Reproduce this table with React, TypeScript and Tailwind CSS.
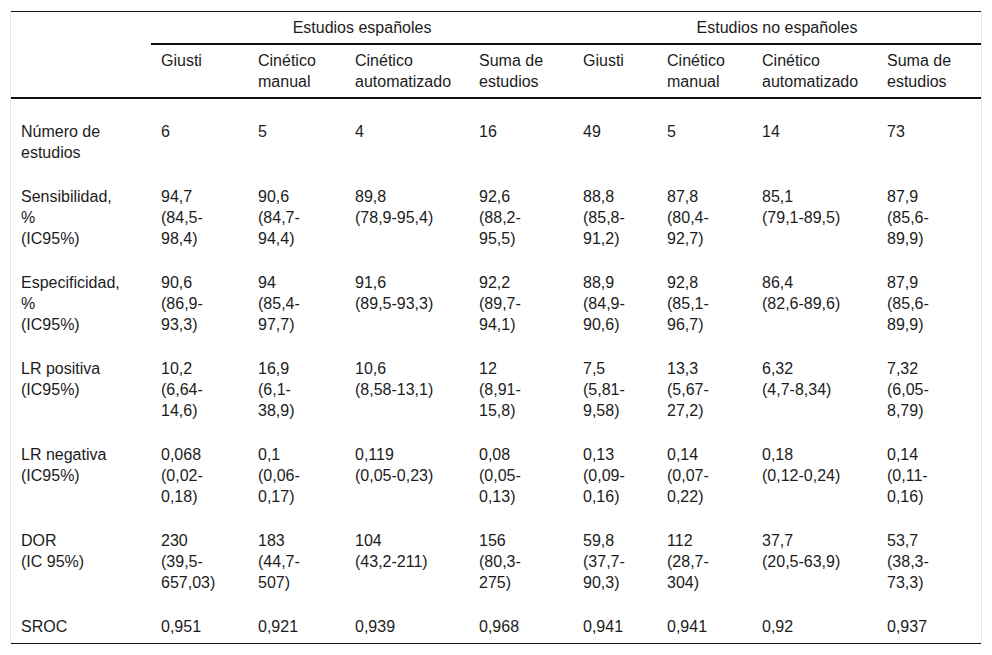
const widths = [140, 97, 97, 124, 104, 84, 95, 125, 104];

const subHeaders = [
  "Giusti",
  "Cinético\nmanual",
  "Cinético\nautomatizado",
  "Suma de\nestudios",
  "Giusti",
  "Cinético\nmanual",
  "Cinético\nautomatizado",
  "Suma de\nestudios",
];

const rows = [
  ["Número de\nestudios", "6", "5", "4", "16", "49", "5", "14", "73"],
  [
    "Sensibilidad,\n%\n(IC95%)",
    "94,7\n(84,5-\n98,4)",
    "90,6\n(84,7-\n94,4)",
    "89,8\n(78,9-95,4)",
    "92,6\n(88,2-\n95,5)",
    "88,8\n(85,8-\n91,2)",
    "87,8\n(80,4-\n92,7)",
    "85,1\n(79,1-89,5)",
    "87,9\n(85,6-\n89,9)",
  ],
  [
    "Especificidad,\n%\n(IC95%)",
    "90,6\n(86,9-\n93,3)",
    "94\n(85,4-\n97,7)",
    "91,6\n(89,5-93,3)",
    "92,2\n(89,7-\n94,1)",
    "88,9\n(84,9-\n90,6)",
    "92,8\n(85,1-\n96,7)",
    "86,4\n(82,6-89,6)",
    "87,9\n(85,6-\n89,9)",
  ],
  [
    "LR positiva\n(IC95%)",
    "10,2\n(6,64-\n14,6)",
    "16,9\n(6,1-\n38,9)",
    "10,6\n(8,58-13,1)",
    "12\n(8,91-\n15,8)",
    "7,5\n(5,81-\n9,58)",
    "13,3\n(5,67-\n27,2)",
    "6,32\n(4,7-8,34)",
    "7,32\n(6,05-\n8,79)",
  ],
  [
    "LR negativa\n(IC95%)",
    "0,068\n(0,02-\n0,18)",
    "0,1\n(0,06-\n0,17)",
    "0,119\n(0,05-0,23)",
    "0,08\n(0,05-\n0,13)",
    "0,13\n(0,09-\n0,16)",
    "0,14\n(0,07-\n0,22)",
    "0,18\n(0,12-0,24)",
    "0,14\n(0,11-\n0,16)",
  ],
  [
    "DOR\n(IC 95%)",
    "230\n(39,5-\n657,03)",
    "183\n(44,7-\n507)",
    "104\n(43,2-211)",
    "156\n(80,3-\n275)",
    "59,8\n(37,7-\n90,3)",
    "112\n(28,7-\n304)",
    "37,7\n(20,5-63,9)",
    "53,7\n(38,3-\n73,3)",
  ],
  ["SROC", "0,951", "0,921", "0,939", "0,968", "0,941", "0,941", "0,92", "0,937"],
];

const Lines = ({ text }: { text: string }) => (
  <>
    {text.split("\n").map((line, i) => (
      <div key={i}>{line}</div>
    ))}
  </>
);

export default function App() {
  return (
    <div className="bg-white min-h-[655px] pt-[11px] pl-[10px] font-['Liberation_Sans',Arial,sans-serif] text-[16px] leading-[21px] text-[#1c1c1c]">
      <div className="w-[972px] border-x border-[#e6e6e6]">
        <table className="table-fixed border-separate border-spacing-0 w-[970px]">
          <colgroup>
            {widths.map((w, i) => (
              <col key={i} style={{ width: w }} />
            ))}
          </colgroup>
          <thead>
            <tr>
              <th
                rowSpan={2}
                className="border-t border-b-2 border-[#111] px-[10px] py-[5px]"
              ></th>
              <th
                colSpan={4}
                className="border-t border-b-2 border-[#111] px-[10px] py-[5px] text-center font-normal"
              >
                Estudios españoles
              </th>
              <th
                colSpan={4}
                className="border-t border-b-2 border-[#111] px-[10px] py-[5px] text-center font-normal"
              >
                Estudios no españoles
              </th>
            </tr>
            <tr>
              {subHeaders.map((h, i) => (
                <th
                  key={i}
                  className="border-b-2 border-[#111] px-[10px] py-[5px] text-left align-top font-normal whitespace-nowrap"
                >
                  <Lines text={h} />
                </th>
              ))}
            </tr>
          </thead>
          <tbody>
            {rows.map((row, r) => {
              const first = r === 0;
              const last = r === rows.length - 1;
              return (
                <tr key={r}>
                  {row.map((cell, c) => (
                    <td
                      key={c}
                      className={
                        "px-[10px] align-top whitespace-nowrap " +
                        (first
                          ? "pt-[22px] pb-[5px]"
                          : last
                          ? "pt-[18px] pb-[6px] border-b border-[#111]"
                          : "pt-[18px] pb-[5px]")
                      }
                    >
                      <Lines text={cell} />
                    </td>
                  ))}
                </tr>
              );
            })}
          </tbody>
        </table>
      </div>
    </div>
  );
}
